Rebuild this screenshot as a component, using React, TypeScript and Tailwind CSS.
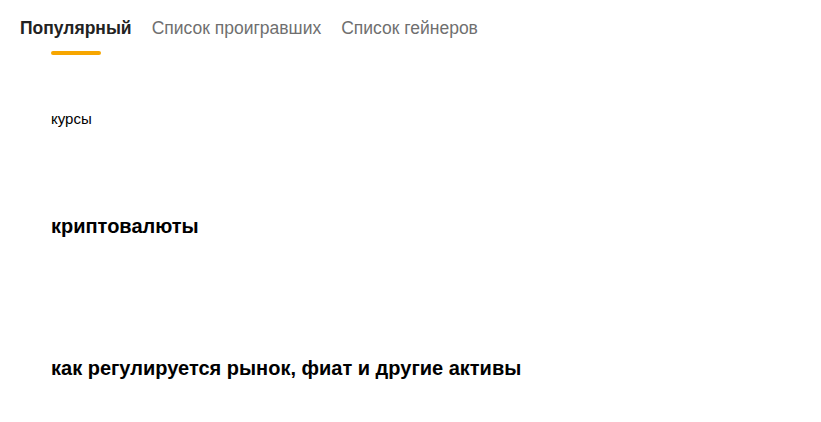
const tabs = ["Популярный", "Список проигравших", "Список гейнеров"];

export default function App() {
  return (
    <div className="min-h-[422px] w-full bg-white font-['Liberation_Sans',Arial,sans-serif]">
      <div className="flex gap-5 px-5 pt-[17px]">
        {tabs.map((t, i) => (
          <div key={t} className="flex flex-col items-center">
            <span
              className={
                i === 0
                  ? "text-[17.5px] leading-[22px] font-bold text-[#222222]"
                  : "text-[17.5px] leading-[22px] text-[#6f6f6f]"
              }
            >
              {t}
            </span>
            {i === 0 && <div className="mt-[12px] h-[4px] w-[50px] rounded-full bg-[#f7a600]" />}
          </div>
        ))}
      </div>

      <div className="px-[51px]">
        <p className="mt-[55px] text-[15px] leading-[18px] text-black">курсы</p>
        <h2 className="mt-[86px] text-[20px] leading-[24px] font-bold text-black">криптовалюты</h2>
        <h2 className="mt-[118px] text-[20px] leading-[24px] font-bold text-black">
          как регулируется рынок, фиат и другие активы
        </h2>
      </div>
    </div>
  );
}
